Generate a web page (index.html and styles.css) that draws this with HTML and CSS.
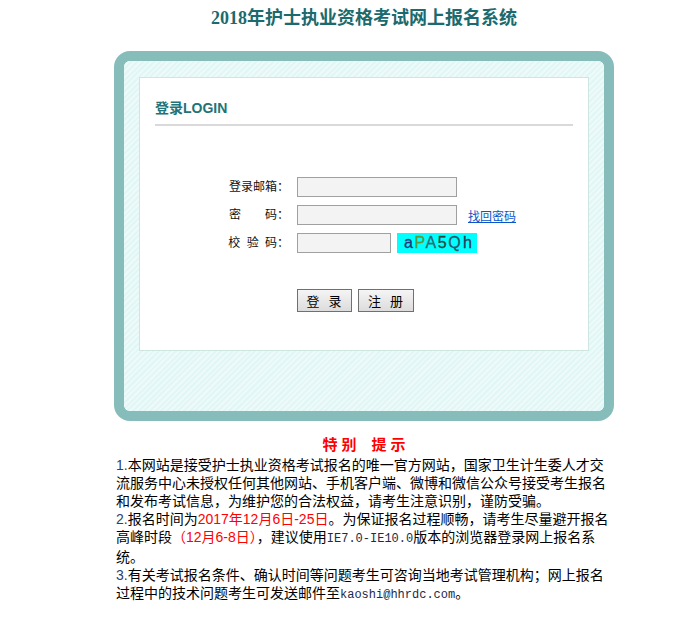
FILE: index.html
```html
<!DOCTYPE html>
<html lang="zh-CN">
<head>
    <meta charset="UTF-8">
    <title>2018年护士执业资格考试网上报名系统</title>
    <link rel="stylesheet" href="styles.css">
</head>
<body>
    <div class="page">
        <h1 class="title">2018年护士执业资格考试网上报名系统</h1>

        <div class="login-box">
            <div class="login-inner">
                <div class="login-panel">
                    <h2 class="panel-head">登录LOGIN</h2>
                    <form class="login-form">
                        <div class="row">
                            <label class="label" for="email">登录邮箱：</label>
                            <input class="field" type="text" id="email">
                        </div>
                        <div class="row">
                            <label class="label" for="pwd">密　　码：</label>
                            <input class="field" type="password" id="pwd">
                            <a class="forgot" href="#">找回密码</a>
                        </div>
                        <div class="row">
                            <label class="label label-spaced" for="code">校 验 码：</label>
                            <input class="field field-short" type="text" id="code">
                            <span class="captcha"><i class="c1">a</i><i class="c2">P</i><i class="c3">A</i><i class="c4">5</i><i class="c5">Q</i><i class="c6">h</i></span>
                        </div>
                        <div class="buttons">
                            <button type="button" class="btn">登 录</button>
                            <button type="button" class="btn">注 册</button>
                        </div>
                    </form>
                </div>
            </div>
        </div>

        <div class="notice">
            <div class="notice-title"><span>特别</span><span>提示</span></div>
            <p><span class="num">1.</span>本网站是接受护士执业资格考试报名的唯一官方网站，国家卫生计生委人才交流服务中心未授权任何其他网站、手机客户端、微博和微信公众号接受考生报名和发布考试信息，为维护您的合法权益，请考生注意识别，谨防受骗。</p>
            <p><span class="num">2.</span>报名时间为<span class="red">2017年12月6日-25日</span>。为保证报名过程顺畅，请考生尽量避开报名高峰时段<span class="red">（12月6-8日）</span>，建议使用<span class="mono">IE7.0-IE10.0</span>版本的浏览器登录网上报名系统。</p>
            <p><span class="num">3.</span>有关考试报名条件、确认时间等问题考生可咨询当地考试管理机构；网上报名过程中的技术问题考生可发送邮件至<span class="mono">kaoshi@hhrdc.com</span>。</p>
        </div>
    </div>
</body>
</html>
```

FILE: styles.css
```css
html, body {
    overflow: hidden;
}
body {
    margin: 0;
    padding: 0;
    background: #fff;
    color: #000;
    font-family: "Liberation Sans", "Noto Sans CJK SC", sans-serif;
}
.page {
    width: 728px;
    margin: 0 auto;
}
.title {
    margin: 0;
    padding-top: 7px;
    font-family: "Liberation Serif", "Noto Sans CJK SC", serif;
    font-size: 18px;
    line-height: 22px;
    font-weight: bold;
    color: #1b6a6e;
    text-align: center;
}
.login-box {
    width: 480px;
    margin: 22px auto 0;
    border: 10px solid #86bdbb;
    border-radius: 16px;
    background: #fff;
}
.login-inner {
    padding: 16px 15px 60px;
    border-radius: 6px;
    background: repeating-linear-gradient(-45deg, #e2f6f5 0, #e2f6f5 2px, #edfafa 2px, #edfafa 4px);
}
.login-panel {
    background: #fff;
    border: 1px solid #cfe6e0;
    padding: 20px 0 38px;
}
.panel-head {
    margin: 0 15px;
    padding-bottom: 6px;
    border-bottom: 2px solid #d9d9d9;
    font-size: 14px;
    line-height: 20px;
    font-weight: bold;
    color: #217377;
}
.login-form {
    margin: 51px 0 0;
}
.row {
    display: flex;
    align-items: center;
    height: 20px;
    margin-bottom: 8px;
}
.label {
    width: 149px;
    margin-right: 8px;
    text-align: right;
    font-size: 12px;
    line-height: 20px;
    color: #111;
}
.label-spaced {
    word-spacing: 3px;
}
.field {
    box-sizing: border-box;
    width: 160px;
    height: 20px;
    margin: 0;
    padding: 0 3px;
    border: 1px solid #a0a0a0;
    background: #f3f3f3;
    font-size: 12px;
}
.field-short {
    width: 94px;
}
.forgot {
    margin-left: 11px;
    font-size: 12px;
    color: #0a56c8;
    text-decoration: underline;
}
.captcha {
    display: flex;
    align-items: center;
    width: 80px;
    height: 20px;
    margin-left: 6px;
    padding-left: 7px;
    box-sizing: border-box;
    background: #00ffff;
    font-family: "Liberation Sans", sans-serif;
    font-size: 16px;
    letter-spacing: 0.5px;
    -webkit-text-stroke: 0.3px currentColor;
}
.captcha i {
    font-style: normal;
}
.c1 { color: #1f3577; }
.c2 { color: #5c9a3c; margin-left: 1px; }
.c3 { color: #2a6b6e; }
.c4 { color: #27473c; margin-left: 1px; }
.c5 { color: #28566a; margin-left: 1px; }
.c6 { color: #2a3558; margin-left: 2px; }
.buttons {
    display: flex;
    gap: 6px;
    margin: 36px 0 0 157px;
}
.btn {
    width: 55px;
    height: 23px;
    padding: 0 0 0 1px;
    border: 1px solid #707070;
    background: linear-gradient(#f5f5f5, #dcdcdc);
    font-family: "Noto Sans CJK SC", sans-serif;
    font-size: 13px;
    line-height: 20px;
    letter-spacing: 2px;
    word-spacing: 2px;
    color: #000;
    cursor: pointer;
}
.btn + .btn {
    width: 56px;
}
.notice {
    width: 496px;
    margin: 14px auto 0;
    font-size: 14px;
    line-height: 18px;
}
.notice-title {
    display: flex;
    justify-content: center;
    gap: 11px;
    padding-left: 4px;
    margin-bottom: 1px;
    font-family: "Liberation Serif", "Noto Sans CJK SC", serif;
    font-size: 15px;
    line-height: 20px;
    font-weight: bold;
    color: #ff0000;
    letter-spacing: 4px;
}
.notice p {
    margin: 0;
}
.num {
    color: #2c4170;
}
.red {
    color: #ff0000;
}
.mono {
    font-family: "Liberation Mono", monospace;
    font-size: 12px;
    color: #1c2a4a;
}
```
